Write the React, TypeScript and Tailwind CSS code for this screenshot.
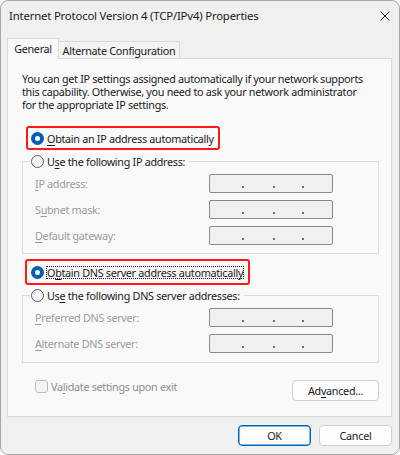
import React from "react";

function Radio({ checked }: { checked?: boolean }) {
    if (checked) {
        return (
            <span className="flex h-[13px] w-[13px] shrink-0 items-center justify-center rounded-full bg-[#005fb8]">
                <span className="h-[5px] w-[5px] rounded-full bg-white" />
            </span>
        );
    }
    return <span className="h-[13px] w-[13px] shrink-0 rounded-full border border-[#5c5c5c] bg-[#f6f6f6]" />;
}

function IpBox() {
    return (
        <div className="flex h-[19px] w-[124px] items-end rounded-[2px] border border-[#8a8a8a] bg-[#f0f0f0] pb-[4px]">
            <span className="ml-[32px] h-[2px] w-[2px] bg-[#6b6b8a]" />
            <span className="ml-[29px] h-[2px] w-[2px] bg-[#6b6b8a]" />
            <span className="ml-[27px] h-[2px] w-[2px] bg-[#6b6b8a]" />
        </div>
    );
}

function IpRow({ label, keyChar, rest }: { label?: string; keyChar: string; rest: string }) {
    return (
        <div className="flex h-[19px] items-center">
            <span className="w-[174px] text-[#9b9b9b]">
                {label}
                <u className="underline-offset-2">{keyChar}</u>
                {rest}
            </span>
            <IpBox />
        </div>
    );
}

function GroupLegend({ children }: { children: React.ReactNode }) {
    return (
        <div className="-mt-[7px] ml-[7px] flex h-[13px] w-fit items-center gap-[3px] bg-[#f9f9f9] pl-[1px] pr-[4px]">
            <Radio />
            <span>{children}</span>
        </div>
    );
}

export default function App() {
    return (
        <div className="flex h-[455px] w-[400px] flex-col overflow-hidden whitespace-nowrap rounded-[8px] border border-[#a8a8a8] bg-[#f0f0f0] font-['Segoe_UI','Noto_Sans',sans-serif] text-[10.8px] leading-[13px] tracking-[-0.3px] text-[#1a1a1a]">
            {/* title bar */}
            <div className="flex h-[29px] shrink-0 items-center justify-between pl-[8px] pr-[9px]">
                <span className="text-[11.4px] tracking-[-0.2px]">Internet Protocol Version 4 (TCP/IPv4) Properties</span>
                <svg width="10" height="10" viewBox="0 0 10 10" className="text-[#1a1a1a]">
                    <path d="M0.5 0.5 L9.5 9.5 M9.5 0.5 L0.5 9.5" stroke="currentColor" strokeWidth="1" fill="none" />
                </svg>
            </div>

            {/* tabs */}
            <div className="ml-[6px] flex h-[28px] shrink-0 items-end">
                <div className="relative z-10 -mb-px flex h-[21px] w-[52px] items-start justify-center border-x border-t border-[#d9d9d9] bg-[#f9f9f9] pt-[3px]">
                    General
                </div>
                <div className="flex h-[17px] w-[121px] items-center justify-center border-r border-t border-[#d9d9d9] bg-[#f3f3f3]">
                    Alternate Configuration
                </div>
            </div>

            {/* panel */}
            <div className="ml-[6px] flex h-[359px] w-[385px] shrink-0 flex-col border border-[#d9d9d9] bg-[#f9f9f9] pl-[14px]">
                <p className="pt-[13px]">
                    You can get IP settings assigned automatically if your network supports
                    <br />
                    this capability. Otherwise, you need to ask your network administrator
                    <br />
                    for the appropriate IP settings.
                </p>

                <div className="ml-[4px] mt-[15px] flex h-[24px] w-[194px] items-center gap-[3px] rounded-[3px] border-2 border-[#ff1a1a] pl-[3px]">
                    <Radio checked />
                    <span>
                        <u className="underline-offset-2">O</u>btain an IP address automatically
                    </span>
                </div>

                <div className="mt-[11px] flex h-[93px] w-[357px] flex-col border border-[#dcdcdc]">
                    <GroupLegend>
                        U<u className="underline-offset-2">s</u>e the following IP address:
                    </GroupLegend>
                    <div className="ml-[12px] mt-[6px] flex flex-col gap-[7px]">
                        <IpRow keyChar="I" rest="P address:" />
                        <IpRow label="S" keyChar="u" rest="bnet mask:" />
                        <IpRow keyChar="D" rest="efault gateway:" />
                    </div>
                </div>

                <div className="ml-[3px] mt-[5px] flex h-[26px] w-[225px] items-center gap-[2px] rounded-[3px] border-2 border-[#ff1a1a] pl-[4px]">
                    <Radio checked />
                    <span className="border border-dotted border-[#1a1a1a] leading-[11px]">
                        O<u className="underline-offset-2">b</u>tain DNS server address automatically
                    </span>
                </div>

                <div className="mt-[10px] flex h-[68px] w-[357px] flex-col border border-[#dcdcdc]">
                    <GroupLegend>
                        Us<u className="underline-offset-2">e</u> the following DNS server addresses:
                    </GroupLegend>
                    <div className="ml-[12px] mt-[6px] flex flex-col gap-[7px]">
                        <IpRow keyChar="P" rest="referred DNS server:" />
                        <IpRow keyChar="A" rest="lternate DNS server:" />
                    </div>
                </div>

                <div className="mt-[17px] flex w-[357px] items-start justify-between">
                    <div className="ml-[13px] flex h-[13px] items-center gap-[3px] text-[#8d8d8d]">
                        <span className="h-[13px] w-[13px] rounded-[3px] border border-[#bdbdbd] bg-[#f4f4f4]" />
                        <span>
                            Va<u className="underline-offset-2">l</u>idate settings upon exit
                        </span>
                    </div>
                    <button className="flex h-[21px] w-[87px] items-center justify-center rounded-[4px] border border-[#d0d0d0] bg-[#fdfdfd]">
                        Ad<u className="underline-offset-2">v</u>anced...
                    </button>
                </div>
            </div>

            {/* dialog buttons */}
            <div className="mt-[8px] flex justify-end gap-[8px] pr-[7px]">
                <button className="flex h-[21px] w-[73px] items-center justify-center rounded-[4px] border border-[#0067c0] bg-[#fdfdfd] shadow-[inset_0_0_0_0.5px_#0067c0]">
                    OK
                </button>
                <button className="flex h-[21px] w-[73px] items-center justify-center rounded-[4px] border border-[#d0d0d0] bg-[#fdfdfd]">
                    Cancel
                </button>
            </div>
        </div>
    );
}
